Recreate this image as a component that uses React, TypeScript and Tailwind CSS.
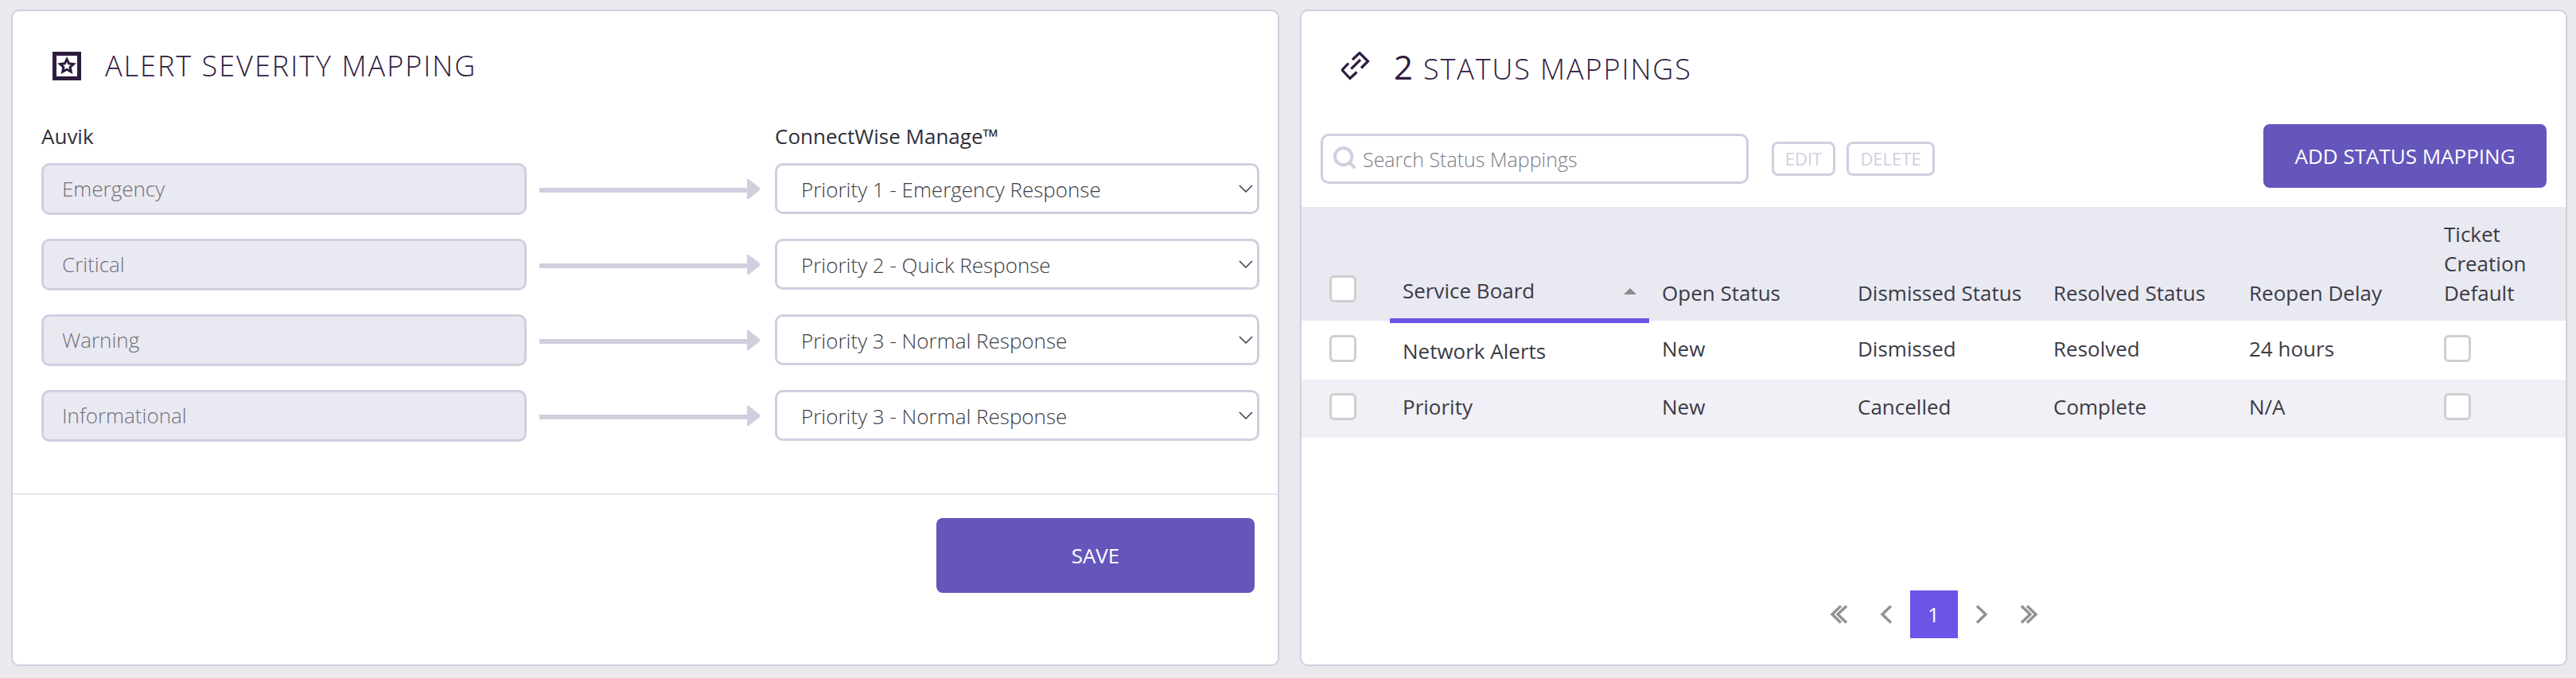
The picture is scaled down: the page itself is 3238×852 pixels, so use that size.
import { Search } from "lucide-react";

const SEVERITIES = [
  { name: "Emergency", priority: "Priority 1 - Emergency Response" },
  { name: "Critical", priority: "Priority 2 - Quick Response" },
  { name: "Warning", priority: "Priority 3 - Normal Response" },
  { name: "Informational", priority: "Priority 3 - Normal Response" },
];

const ROW_COLS = "grid grid-cols-[111px_326px_245px_247px_245px_245px_1fr]";

function Checkbox() {
  return (
    <input
      type="checkbox"
      className="block w-[34px] h-[34px] appearance-none rounded-[6px] border-[3px] border-[#cfcfd2] bg-white"
    />
  );
}

function Arrow() {
  return (
    <svg width="277" height="25" viewBox="0 0 277 25" className="ml-4 mt-5" fill="#d0cfe0">
      <rect x="0" y="11" width="262" height="6" />
      <polygon points="261,0 263,0 277,11 277,14 263,25 261,25" />
    </svg>
  );
}

function Chevron({ dir, double }: { dir: "left" | "right"; double?: boolean }) {
  const flip = dir === "right" ? "-scale-x-100" : "";
  return (
    <button type="button" className="flex w-[60px] h-[60px] items-center justify-center">
      <svg width={double ? 22 : 16} height="24" viewBox={double ? "0 0 22 24" : "0 0 16 24"} className={flip} fill="none" stroke="#919191" strokeWidth="3.4">
        <polyline points="14,1.5 3,12 14,22.5" />
        {double && <polyline points="21,1.5 10,12 21,22.5" />}
      </svg>
    </button>
  );
}

export default function App() {
  return (
    <div className="flex w-[3238px] h-[852px] gap-[26px] bg-[#ebe9ed] pl-[14px] pr-[11px] pt-[12px] pb-[15px] font-['Open_Sans',sans-serif] text-[26px] text-[#3b3b44]">
      {/* severity mapping */}
      <section className="flex flex-col w-[1594px] rounded-[10px] border-2 border-[#d0cfe0] bg-white">
        <header className="flex items-center h-[138px] pl-[50px]">
          <svg width="36" height="36" viewBox="0 0 36 36" className="shrink-0" fill="none" stroke="#2f1b3f">
            <rect x="2.5" y="2.5" width="31" height="31" strokeWidth="5" />
            <polygon
              points="18,9.5 20.6,14.8 26.4,15.5 22.1,19.4 23.3,25.2 18,22.3 12.7,25.2 13.9,19.4 9.6,15.5 15.4,14.8"
              strokeWidth="3"
            />
          </svg>
          <h2 className="ml-[30px] text-[36px] font-light tracking-[2px] text-[#2f1b3f]">ALERT SEVERITY MAPPING</h2>
        </header>

        <div className="pl-[36px] pr-[23px]">
          <div className="grid grid-cols-[922px_609px] h-[53px] leading-[38px] text-[#2f2f38]">
            <span>Auvik</span>
            <span>ConnectWise Manage™</span>
          </div>
          <div className="flex flex-col gap-[30px]">
            {SEVERITIES.map((s) => (
              <div key={s.name} className="grid grid-cols-[610px_312px_609px] h-[65px]">
                <input
                  readOnly
                  value={s.name}
                  className="h-[65px] rounded-[10px] border-[3px] border-[#d0cfe0] bg-[#e9e9f2] pl-[23px] pb-[2px] font-light text-[#6f6f78] outline-none"
                />
                <Arrow />
                <div className="relative h-[64px]">
                  <select
                    defaultValue={s.priority}
                    className="w-full h-full appearance-none rounded-[10px] border-[3px] border-[#d0cfe0] bg-white pl-[30px] pt-[3px] font-light text-[#3b3b44] outline-none"
                  >
                    <option>{s.priority}</option>
                  </select>
                  <svg width="18" height="10" viewBox="0 0 18 10" className="absolute right-[8px] top-[27px]" fill="none" stroke="#3b3b44" strokeWidth="1.5">
                    <polyline points="1,1 9,9 17,1" />
                  </svg>
                </div>
              </div>
            ))}
          </div>
        </div>

        <div className="mt-[65px] border-t-2 border-[#e6e6ea]" />
        <div className="flex justify-end pr-[29px] pt-[29px]">
          <button type="button" className="w-[400px] h-[94px] rounded-[8px] bg-[#6456bb] text-white">
            SAVE
          </button>
        </div>
      </section>

      {/* status mappings */}
      <section className="flex flex-col w-[1593px] rounded-[10px] border-2 border-[#d0cfe0] bg-white">
        <header className="flex items-center h-[142px] pl-[50px] pb-[4px]">
          <svg width="36" height="36" viewBox="0 0 36 36" className="shrink-0" fill="none" stroke="#2f1b3f" strokeWidth="3.2">
            <polyline points="14,10 23,1.5 33.5,12 25,20.5" />
            <polyline points="9,14.5 1,23 11,33.5 19.5,25.5" />
            <line x1="12.3" y1="21.7" x2="24" y2="10" />
          </svg>
          <h2 className="ml-[30px] text-[36px] font-light tracking-[1.9px] text-[#2f1b3f]">
            <span className="text-[42px] font-normal mr-[11px]">2</span>
            STATUS MAPPINGS
          </h2>
        </header>

        <div className="flex items-start h-[80px] pl-[24px] pr-[24px]">
          <div className="relative mt-[12px]">
            <Search className="absolute left-[14px] top-[14px] text-[#d0cfe0]" size={32} strokeWidth={3} />
            <input
              placeholder="Search Status Mappings"
              className="block w-[538px] h-[63px] rounded-[10px] border-[3px] border-[#d0cfe0] bg-white pl-[50px] text-[25px] font-light outline-none placeholder:text-[#7c7c86]"
            />
          </div>
          <button type="button" className="ml-[29px] mt-[22px] w-[80px] h-[43px] rounded-[8px] border-[3px] border-[#d0cfe0] text-[22px] text-[#d0cfe0]">
            EDIT
          </button>
          <button type="button" className="ml-[14px] mt-[22px] w-[111px] h-[43px] rounded-[8px] border-[3px] border-[#d0cfe0] text-[22px] text-[#d0cfe0]">
            DELETE
          </button>
          <button type="button" className="ml-auto w-[356px] h-[80px] rounded-[8px] bg-[#6456bb] text-white">
            ADD STATUS MAPPING
          </button>
        </div>

        <div className={`${ROW_COLS} mt-[24px] h-[143px] items-end bg-[#e9e9f2] leading-[37px]`}>
          <div className="pl-[35px] pb-[23px]">
            <Checkbox />
          </div>
          <div className="relative flex h-full items-end justify-between pl-[16px] pr-[16px] pb-[19px]">
            <span>Service Board</span>
            <span className="mb-[14px] h-0 w-0 border-x-[8px] border-b-[8px] border-x-transparent border-b-[#8a8a8a]" />
            <span className="absolute left-0 right-0 -bottom-[3px] h-[6px] bg-[#6b54e6]" />
          </div>
          <div className="pl-[16px] pb-[16px]">Open Status</div>
          <div className="pl-[17px] pb-[16px]">Dismissed Status</div>
          <div className="pl-[16px] pb-[16px]">Resolved Status</div>
          <div className="pl-[17px] pb-[16px]">Reopen Delay</div>
          <div className="pl-[17px] pb-[16px]">
            Ticket
            <br />
            Creation
            <br />
            Default
          </div>
        </div>

        <div className={`${ROW_COLS} h-[74px] items-center pb-[4px]`}>
          <div className="pl-[35px]">
            <Checkbox />
          </div>
          <div className="pl-[16px] pt-[6px]">Network Alerts</div>
          <div className="pl-[16px]">New</div>
          <div className="pl-[17px]">Dismissed</div>
          <div className="pl-[16px]">Resolved</div>
          <div className="pl-[17px]">24 hours</div>
          <div className="pl-[17px]">
            <Checkbox />
          </div>
        </div>
        <div className={`${ROW_COLS} h-[73px] items-center bg-[#f0f0f6] pb-[5px]`}>
          <div className="pl-[35px]">
            <Checkbox />
          </div>
          <div className="pl-[16px]">Priority</div>
          <div className="pl-[16px]">New</div>
          <div className="pl-[17px]">Cancelled</div>
          <div className="pl-[16px]">Complete</div>
          <div className="pl-[17px]">N/A</div>
          <div className="pl-[17px]">
            <Checkbox />
          </div>
        </div>

        <div className="mt-[192px] flex justify-center">
          <Chevron dir="left" double />
          <Chevron dir="left" />
          <span className="flex w-[60px] h-[60px] items-center justify-center bg-[#6b54e6] text-white">1</span>
          <Chevron dir="right" />
          <Chevron dir="right" double />
        </div>
      </section>
    </div>
  );
}
